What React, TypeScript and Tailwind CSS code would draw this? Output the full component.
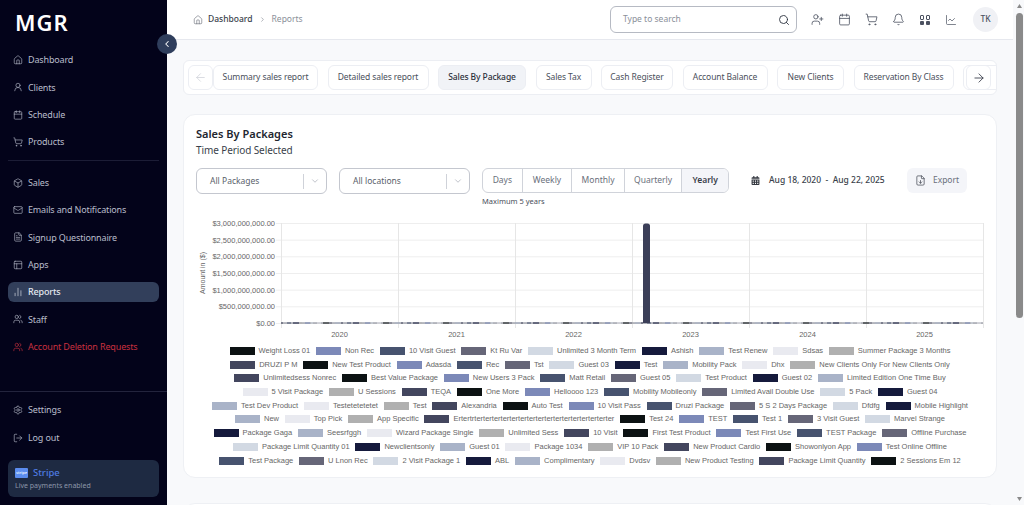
import {
  ArrowLeft, ArrowRight, Bell, Box, Calendar, ChartLine, ChartNoAxesColumn, ChevronDown, ChevronLeft, ChevronRight,
  FileDown, FileText, Home, LogOut, Mail, PanelsTopLeft, Search, Settings, ShoppingCart, UserPlus, UserRound, Users,
} from "lucide-react";
import { FaCalendarAlt } from "react-icons/fa";

const font = { fontFamily: '"Noto Sans", sans-serif' };

const topNav = [
  { label: "Dashboard", icon: Home },
  { label: "Clients", icon: UserRound },
  { label: "Schedule", icon: Calendar },
  { label: "Products", icon: ShoppingCart },
];

const midNav = [
  { label: "Sales", icon: Box },
  { label: "Emails and Notifications", icon: Mail },
  { label: "Signup Questionnaire", icon: FileText },
  { label: "Apps", icon: PanelsTopLeft },
  { label: "Reports", icon: ChartNoAxesColumn, active: true },
  { label: "Staff", icon: Users },
  { label: "Account Deletion Requests", icon: Users, danger: true },
];

const tabs = [
  { label: "Summary sales report", w: "w-[105px]" },
  { label: "Detailed sales report", w: "w-[101px]" },
  { label: "Sales By Package", w: "w-[88px]", active: true },
  { label: "Sales Tax", w: "w-[56px]" },
  { label: "Cash Register", w: "w-[72px]" },
  { label: "Account Balance", w: "w-[85px]" },
  { label: "New Clients", w: "w-[67px]" },
  { label: "Reservation By Class", w: "w-[100px]" },
];

const periods = [
  { label: "Days", w: "w-[40px]" },
  { label: "Weekly", w: "w-[50px]" },
  { label: "Monthly", w: "w-[53px]" },
  { label: "Quarterly", w: "w-[58px]" },
  { label: "Yearly", w: "w-[46px]", active: true },
];

const swatches = ["#43465e", "#0c1213", "#7c89b8", "#47536f", "#666678", "#d2d9e3", "#151a3c", "#a9b3c8", "#e9eaf0", "#b0b0b0"];

const legendRows = [
  ["Weight Loss 01", "Non Rec", "10 Visit Guest", "Kt Ru Var", "Unlimited 3 Month Term", "Ashish", "Test Renew", "Sdsas", "Summer Package 3 Months"],
  ["DRUZI P M", "New Test Product", "Adasda", "Rec", "Tst", "Guest 03", "Test", "Mobility Pack", "Dhx", "New Clients Only For New Clients Only"],
  ["Unlimitedsess Nonrec", "Best Value Package", "New Users 3 Pack", "Matt Retail", "Guest 05", "Test Product", "Guest 02", "Limited Edition One Time Buy"],
  ["5 Visit Package", "U Sessions", "TEQA", "One More", "Helloooo 123", "Mobility Mobileonly", "Limited Avail Double Use", "5 Pack", "Guest 04"],
  ["Test Dev Product", "Testetetetetet", "Test", "Alexandria", "Auto Test", "10 Visit Pass", "Druzi Package", "5 S 2 Days Package", "Dfdfg", "Mobile Highlight"],
  ["New", "Top Pick", "App Specific", "Ertertrterterterterterterterterterterterterterterterter", "Test 24", "TEST", "Test 1", "3 Visit Guest", "Marvel Strange"],
  ["Package Gaga", "Seesrfggh", "Wizard Package Single", "Unlimited Sess", "10 Visit", "First Test Product", "Test First Use", "TEST Package", "Offline Purchase"],
  ["Package Limit Quantity 01", "Newclientsonly", "Guest 01", "Package 1034", "VIP 10 Pack", "New Product Cardio", "Showonlyon App", "Test Online Offline"],
  ["Test Package", "U Lnon Rec", "2 Visit Package 1", "ABL", "Complimentary", "Dvdsv", "New Product Testing", "Package Limit Quantity", "2 Sessions Em 12"],
];

const yLabels = ["$3,000,000,000.00", "$2,500,000,000.00", "$2,000,000,000.00", "$1,500,000,000.00", "$1,000,000,000.00", "$500,000,000.00", "$0.00"];
const years = ["2020", "2021", "2022", "2023", "2024", "2025"];

function NavItem({ label, icon: Icon, active, danger }: { label: string; icon: typeof Home; active?: boolean; danger?: boolean }) {
  return (
    <div
      className={`flex h-5 items-center gap-[5px] whitespace-nowrap rounded-md px-[5px] text-[9px] tracking-[-0.15px] ${
        active ? "bg-[#323f5b] font-medium text-[#e3e7ef]" : danger ? "text-[#c8303f]" : "text-[#b9bdcb]"
      }`}
    >
      <Icon size={10} strokeWidth={1.5} className="shrink-0" />
      <span>{label}</span>
    </div>
  );
}

function Sidebar() {
  return (
    <aside className="flex h-full w-[167px] shrink-0 flex-col bg-[#03031a] pb-2">
      <div className="pl-[15px] pt-[6px] text-[22px] font-semibold leading-[32px] tracking-[1px] text-white">MGR</div>
      <nav className="mt-[12px] flex flex-col gap-[7.3px] px-2">
        {topNav.map((item) => (
          <NavItem key={item.label} {...item} />
        ))}
      </nav>
      <div className="mx-2 mb-[12px] mt-[8px] h-px bg-[#1c1d36]" />
      <nav className="flex flex-col gap-[7.3px] px-2">
        {midNav.map((item) => (
          <NavItem key={item.label} {...item} />
        ))}
      </nav>
      <div className="mt-auto h-px bg-[#23243d]" />
      <div className="mt-[8px] flex flex-col gap-2 px-2">
        <NavItem label="Settings" icon={Settings} />
        <NavItem label="Log out" icon={LogOut} />
      </div>
      <div className="mx-2 mt-[12px] h-[37px] rounded-md bg-[#1e2a42] px-[7px] pt-[7px]">
        <div className="flex items-center gap-[5px] text-[9.5px] font-medium leading-[12px] text-[#4f7be0]">
          <span className="flex h-[10px] w-[13px] items-center justify-center rounded-[1px] bg-[#5c8dee] text-[4px] text-white">stripe</span>
          Stripe
        </div>
        <div className="mt-[1px] text-[7px] leading-[12px] text-[#8d96a9]">Live payments enabled</div>
      </div>
    </aside>
  );
}

function Header() {
  const icons = [UserPlus, Calendar, ShoppingCart, Bell];
  return (
    <header className="flex h-[40px] shrink-0 items-center justify-between border-b border-[#e6e8ee] bg-white pl-[26px] pr-[15px]">
      <div className="flex items-center text-[8.5px]">
        <Home size={10} strokeWidth={1.5} className="text-[#666b76]" />
        <span className="ml-[5px] font-medium text-[#3a3f4b]">Dashboard</span>
        <ChevronRight size={7} className="mx-[6px] text-[#7b808a]" />
        <span className="text-[#8a8f99]">Reports</span>
      </div>
      <div className="flex items-center">
        <div className="flex h-[27px] w-[187px] items-center justify-between rounded-md border border-[#b6bac3] pl-[12px] pr-[6px] text-[8.5px] text-[#8a8f99]">
          Type to search
          <Search size={12} strokeWidth={1.8} className="text-[#2d3340]" />
        </div>
        {icons.map((Icon, i) => (
          <span key={i} className="ml-[14px] flex w-[13px] justify-center text-[#4b5160]">
            <Icon size={13} strokeWidth={1.5} />
          </span>
        ))}
        <span className="ml-[15px] grid h-[10px] w-[10px] grid-cols-2 gap-[1.5px]">
          <span className="rounded-[1px] border border-[#4b5160]" />
          <span className="rounded-[1px] border border-[#4b5160]" />
          <span className="rounded-[1px] bg-[#4b5160]" />
          <span className="rounded-[1px] bg-[#4b5160]" />
        </span>
        <ChartLine size={12} strokeWidth={1.4} className="ml-[15px] text-[#4b5160]" />
        <span className="ml-[16px] flex h-[25px] w-[25px] items-center justify-center rounded-full bg-[#f0f1f5] text-[8.5px] font-medium text-[#4b5160]">TK</span>
      </div>
    </header>
  );
}

function Tabs() {
  return (
    <div className="relative flex h-[35px] items-center overflow-hidden rounded-md border border-[#eceef3] bg-white pl-[4px]">
      <span className="flex h-[25px] w-[25px] shrink-0 items-center justify-center rounded-md border border-[#eceef3] text-[#d1d4db]">
        <ArrowLeft size={13} strokeWidth={1.5} />
      </span>
      <div className="flex gap-[9.5px]">
        {tabs.map((t) => (
          <span
            key={t.label}
            className={`flex h-[25px] shrink-0 items-center justify-center whitespace-nowrap rounded-md border border-[#eceef3] text-[8.5px] tracking-[-0.1px] ${t.w} ${
              t.active ? "bg-[#f1f3f7] font-medium text-[#2c303a]" : "text-[#4a4f5b]"
            }`}
          >
            {t.label}
          </span>
        ))}
        <span className="h-[25px] w-[60px] shrink-0 rounded-md border border-[#eceef3]" />
      </div>
      {/* next arrow floats over the clipped tab row */}
      <span className="absolute right-[5px] top-[4px] flex h-[25px] w-[25px] items-center justify-center rounded-md border border-[#eceef3] bg-white text-[#3a3f4b]">
        <ArrowRight size={14} strokeWidth={1.5} />
      </span>
    </div>
  );
}

function SelectBox({ label, w }: { label: string; w: string }) {
  return (
    <div className={`flex h-[26px] items-center rounded-md border border-[#c4c7cf] pl-[13px] text-[8.5px] text-[#5a5f6b] ${w}`}>
      <span className="flex-1">{label}</span>
      <span className="h-[15px] w-px bg-[#cfd2d9]" />
      <ChevronDown size={10} className="mx-[6px] text-[#b4b8c1]" />
    </div>
  );
}

function Filters() {
  return (
    <div className="mt-[10px] flex items-start">
      <SelectBox label="All Packages" w="w-[131px]" />
      <div className="ml-[12px]">
        <SelectBox label="All locations" w="w-[131px]" />
      </div>
      <div className="ml-[12px]">
        <div className="flex h-[25px] w-[247px] overflow-hidden rounded-md border border-[#d0d3da] text-[8.5px]">
          {periods.map((p) => (
            <span
              key={p.label}
              className={`flex items-center justify-center border-r border-[#d0d3da] last:border-r-0 ${p.w} ${
                p.active ? "bg-[#f4f5f9] font-semibold text-[#3a3f4b]" : "text-[#6a6f7b]"
              }`}
            >
              {p.label}
            </span>
          ))}
        </div>
        <div className="mt-[2px] text-[7.5px] leading-[12px] text-[#4a4f5b]">Maximum 5 years</div>
      </div>
      <div className="ml-[13px] mt-[2px] flex h-[21px] w-[153px] items-center rounded-md pl-[9px] text-[8.5px] font-medium text-[#3a3f4b]">
        <FaCalendarAlt size={9} className="text-[#33373f]" />
        <span className="ml-[9px] whitespace-nowrap">Aug 18, 2020&nbsp; - &nbsp;Aug 22, 2025</span>
      </div>
      <div className="ml-[12px] flex h-[25px] w-[60px] items-center justify-center gap-[7px] rounded-md bg-[#f4f5f9] text-[8.5px] text-[#6a6f7b]">
        <FileDown size={11} strokeWidth={1.5} className="text-[#3a3f4b]" />
        Export
      </div>
    </div>
  );
}

function Chart() {
  const left = 85;
  const right = 787;
  const top = 5;
  const bottom = 105;
  const stepX = (right - left) / 6;
  const stepY = (bottom - top) / 6;
  // hundreds of tiny datasets sit on the baseline, so it reads as a dark uneven line
  const specks = Array.from({ length: 117 }, (_, i) => ({
    x: left + i * 6,
    w: 2 + (i * 7) % 5,
    fill: swatches[(i * 3) % 10],
  }));
  return (
    <svg width={790} height={122} className="mt-[11px] block" style={{ fontFamily: '"Liberation Sans", sans-serif' }}>
      {yLabels.map((label, i) => (
        <g key={label}>
          <line x1={left - 5} x2={right} y1={top + i * stepY + 0.5} y2={top + i * stepY + 0.5} stroke="#eeeeee" />
          <text x={left - 6} y={top + i * stepY + 3} textAnchor="end" fontSize={7.5} fill="#666">{label}</text>
        </g>
      ))}
      {Array.from({ length: 7 }, (_, i) => (
        <line key={i} x1={left + i * stepX + 0.5} x2={left + i * stepX + 0.5} y1={top} y2={bottom + 5} stroke="#e6e6e6" />
      ))}
      {years.map((y, i) => (
        <text key={y} x={left + (i + 0.5) * stepX} y={119} textAnchor="middle" fontSize={7.5} fill="#666">{y}</text>
      ))}
      <text transform="translate(9 55) rotate(-90)" textAnchor="middle" fontSize={7} fill="#666">Amount in ($)</text>
      <rect x={left} y={bottom - 0.5} width={right - left} height={1} fill="#777a88" />
      {specks.map((s) => (
        <rect key={s.x} x={s.x} y={bottom - 0.5} width={s.w} height={1} fill={s.fill} />
      ))}
      <path d="M447 105V8a2.5 2.5 0 0 1 2.5-2.5h2a2.5 2.5 0 0 1 2.5 2.5V105Z" fill="#3b3f58" />
    </svg>
  );
}

function Legend() {
  let n = 0;
  return (
    <div className="mt-[6px] flex flex-col gap-[3.7px] text-[7.5px] leading-[10px] text-[#666]" style={{ fontFamily: '"Liberation Sans", sans-serif' }}>
      {legendRows.map((row, r) => (
        <div key={r} className="flex justify-center gap-[5.8px] whitespace-nowrap">
          {row.map((label) => {
            n += 1;
            return (
              <span key={label} className="flex items-center gap-[4px]">
                <span className="h-[8px] w-[25px]" style={{ backgroundColor: swatches[n % 10] }} />
                {label}
              </span>
            );
          })}
        </div>
      ))}
    </div>
  );
}

// the reference shows the browser's classic thin scrollbar; the sandbox only draws overlay ones
function ScrollStrip() {
  return (
    <div className="flex h-full w-[11px] shrink-0 flex-col items-center bg-[#f8f9fb] pl-[2px]">
      <svg width={7} height={13} className="shrink-0 text-[#8a8a8a]">
        <path d="M1 8 3.5 4 6 8Z" fill="currentColor" />
      </svg>
      <div className="h-[305px] w-[7px] rounded-full bg-[#8a8a8a]" />
      <svg width={7} height={13} className="mt-auto shrink-0 text-[#8a8a8a]">
        <path d="M1 5 3.5 9 6 5Z" fill="currentColor" />
      </svg>
    </div>
  );
}

export default function App() {
  return (
    <div className="relative flex h-screen overflow-hidden bg-[#f8f9fb]" style={font}>
      <Sidebar />
      {/* collapse toggle straddles the sidebar edge */}
      <button className="absolute left-[157px] top-[34px] z-10 flex h-5 w-5 items-center justify-center rounded-full bg-[#2f3e5c] text-white">
        <ChevronLeft size={10} strokeWidth={2.5} />
      </button>
      <main className="flex-1 overflow-y-scroll">
        <Header />
        <div className="flex flex-col px-4 pb-4 pt-5">
          <Tabs />
          <section className="mt-[19px] h-[364px] rounded-xl border border-[#eef0f4] bg-white px-[12px] pt-[11px]">
            <h2 className="text-[11px] font-semibold leading-[16px] text-[#22262f]">Sales By Packages</h2>
            <p className="text-[10px] leading-[16px] tracking-[-0.1px] text-[#3a3f4b]">Time Period Selected</p>
            <Filters />
            <Chart />
            <Legend />
          </section>
          <section className="mt-[25px] h-[280px] rounded-xl border border-[#eef0f4] bg-white" />
        </div>
      </main>
      <ScrollStrip />
    </div>
  );
}
